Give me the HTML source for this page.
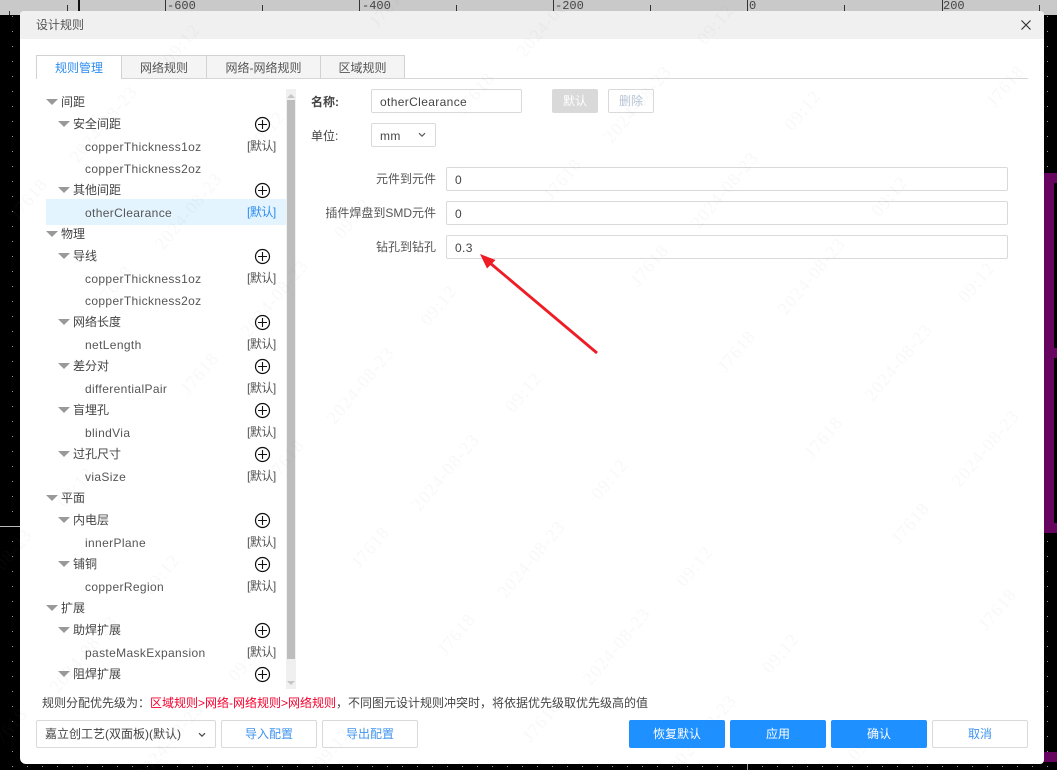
<!DOCTYPE html>
<html lang="zh"><head><meta charset="utf-8"><title>设计规则</title>
<style>
html,body{margin:0;padding:0;background:#000}
body{width:1057px;height:770px;position:relative;overflow:hidden;font-family:"Liberation Sans","Noto Sans CJK SC",sans-serif;font-size:12px;color:#444}
.a{position:absolute;white-space:nowrap}
.row{position:absolute;height:22px;line-height:23px;white-space:nowrap;font-size:12px}
.en{font-size:12px;letter-spacing:.36px;color:#555;line-height:24px}
.tri{position:absolute;width:0;height:0;border-left:6px solid transparent;border-right:6px solid transparent;border-top:6px solid #999}
.def{position:absolute;left:247px;height:22px;line-height:23px;font-size:12px;color:#555;letter-spacing:-.5px}
.box{position:absolute;box-sizing:border-box;border:1px solid #d9d9d9;border-radius:2px;background:transparent;line-height:24px;color:#444}
.tab{position:absolute;top:55px;height:23px;box-sizing:border-box;border:1px solid #d2d2d2;border-bottom:0;background:#f4f4f4;text-align:center;line-height:24px;font-size:12px;color:#555}
.btn{position:absolute;top:720px;height:28px;box-sizing:border-box;border-radius:2px;text-align:center;line-height:28px;font-size:12px}
.pri{background:#1e90ff;color:#fff}
.sec{border:1px solid #d9d9d9;color:#3f93ee;background:transparent}
.lbl{position:absolute;right:621px;height:24px;line-height:25px;font-size:12px;color:#555}
</style></head><body>

<svg class="a" style="left:0;top:0" width="1057" height="770">
<defs><pattern id="d" x="12" y="16" width="15" height="15" patternUnits="userSpaceOnUse"><rect width="1" height="1" fill="#999"/></pattern></defs>
<rect width="1057" height="770" fill="#000"/>
<rect width="1057" height="770" fill="url(#d)"/>
<rect x="0" y="526" width="20" height="1" fill="#bbb"/>
<rect x="747" y="764" width="1" height="6" fill="#999"/>
<path d="M1044 173H1057V183H1054V348H1057V358H1054V523H1057V533H1044Z" fill="#66045f"/>
<rect x="1044" y="752" width="13" height="10" fill="#66045f"/>
<rect x="0" y="0" width="1057" height="15" fill="#c9c9c9"/>
<rect x="78" y="0" width="2" height="15" fill="#111"/>
<g fill="#333"><rect x="9" y="11" width="1" height="4"/><rect x="67" y="5" width="1" height="10"/><rect x="165" y="0" width="1" height="15"/><rect x="262" y="5" width="1" height="10"/><rect x="359" y="0" width="1" height="15"/><rect x="456" y="5" width="1" height="10"/><rect x="553" y="0" width="1" height="15"/><rect x="650" y="5" width="1" height="10"/><rect x="747" y="0" width="1" height="15"/><rect x="844" y="5" width="1" height="10"/><rect x="942" y="0" width="1" height="15"/><rect x="1039" y="5" width="1" height="10"/></g>
<g font-family="Liberation Mono,monospace" font-size="12" fill="#444"><text x="167" y="9">-600</text><text x="362" y="9">-400</text><text x="555" y="9">-200</text><text x="749" y="9">0</text><text x="943" y="9">200</text></g>
</svg>

<div class="a" style="left:20px;top:11px;width:1024px;height:753px;background:#fff;border-radius:4px 4px 4px 6px;overflow:hidden">
<div class="a" style="left:0;top:0;width:1024px;height:28px;background:#f0f0f0"></div>
</div>

<div class="a" style="left:36px;top:16px;height:18px;line-height:18px;font-size:12px;color:#555">设计规则</div>
<svg class="a" style="left:1020px;top:19px" width="12" height="12"><path d="M1.5 1.5L10.5 10.5M10.5 1.5L1.5 10.5" stroke="#333" stroke-width="1.2" fill="none"/></svg>

<div class="a" style="left:36px;top:78px;width:992px;height:1px;background:#d6d6d6"></div>
<div class="tab" style="left:36px;width:86px;background:#fff;color:#2d8cf0;border-right:1px solid #d2d2d2;height:24px;z-index:2">规则管理</div>
<div class="tab" style="left:121px;width:86px">网络规则</div>
<div class="tab" style="left:206px;width:115px">网络-网络规则</div>
<div class="tab" style="left:320px;width:85px">区域规则</div>

<div class="a" style="left:46px;top:199px;width:240px;height:26px;background:#e3f4fe"></div>
<div class="a" style="left:286px;top:89px;width:10px;height:600px;background:#f0f0f0"></div>
<div class="a" style="left:287px;top:100px;width:8px;height:559px;background:#bdbdbd"></div>
<div class="tri" style="left:287px;top:94px;border-left-width:4px;border-right-width:4px;border-top:0;border-bottom:4px solid #c6c6c6"></div>
<div class="tri" style="left:287px;top:681px;border-left-width:4px;border-right-width:4px;border-top-width:4px;border-top-color:#c6c6c6"></div>

<div class="tri" style="left:46px;top:99px"></div><div class="row" style="left:61px;top:91px">间距</div>
<div class="tri" style="left:58px;top:121px"></div><div class="row" style="left:73px;top:113px">安全间距</div>
<div class="row en" style="left:85px;top:135px">copperThickness1oz</div><div class="def" style="top:135px">[默认]</div>
<div class="row en" style="left:85px;top:157px">copperThickness2oz</div>
<div class="tri" style="left:58px;top:187px"></div><div class="row" style="left:73px;top:179px">其他间距</div>
<div class="row en" style="left:85px;top:201px">otherClearance</div><div class="def" style="top:201px;color:#2d8cf0">[默认]</div>
<div class="tri" style="left:46px;top:231px"></div><div class="row" style="left:61px;top:223px">物理</div>
<div class="tri" style="left:58px;top:253px"></div><div class="row" style="left:73px;top:245px">导线</div>
<div class="row en" style="left:85px;top:267px">copperThickness1oz</div><div class="def" style="top:267px">[默认]</div>
<div class="row en" style="left:85px;top:289px">copperThickness2oz</div>
<div class="tri" style="left:58px;top:319px"></div><div class="row" style="left:73px;top:311px">网络长度</div>
<div class="row en" style="left:85px;top:333px">netLength</div><div class="def" style="top:333px">[默认]</div>
<div class="tri" style="left:58px;top:363px"></div><div class="row" style="left:73px;top:355px">差分对</div>
<div class="row en" style="left:85px;top:377px">differentialPair</div><div class="def" style="top:377px">[默认]</div>
<div class="tri" style="left:58px;top:407px"></div><div class="row" style="left:73px;top:399px">盲埋孔</div>
<div class="row en" style="left:85px;top:421px">blindVia</div><div class="def" style="top:421px">[默认]</div>
<div class="tri" style="left:58px;top:451px"></div><div class="row" style="left:73px;top:443px">过孔尺寸</div>
<div class="row en" style="left:85px;top:465px">viaSize</div><div class="def" style="top:465px">[默认]</div>
<div class="tri" style="left:46px;top:495px"></div><div class="row" style="left:61px;top:487px">平面</div>
<div class="tri" style="left:58px;top:517px"></div><div class="row" style="left:73px;top:509px">内电层</div>
<div class="row en" style="left:85px;top:531px">innerPlane</div><div class="def" style="top:531px">[默认]</div>
<div class="tri" style="left:58px;top:561px"></div><div class="row" style="left:73px;top:553px">铺铜</div>
<div class="row en" style="left:85px;top:575px">copperRegion</div><div class="def" style="top:575px">[默认]</div>
<div class="tri" style="left:46px;top:605px"></div><div class="row" style="left:61px;top:597px">扩展</div>
<div class="tri" style="left:58px;top:627px"></div><div class="row" style="left:73px;top:619px">助焊扩展</div>
<div class="row en" style="left:85px;top:641px">pasteMaskExpansion</div><div class="def" style="top:641px">[默认]</div>
<div class="tri" style="left:58px;top:671px"></div><div class="row" style="left:73px;top:663px">阻焊扩展</div>

<svg class="a" style="left:0;top:0" width="300" height="700">
<defs><g id="p"><circle r="7" fill="#fff" stroke="#111" stroke-width="1.2"/><path d="M-4.5 0H4.5M0 -4.5V4.5" stroke="#111" stroke-width="1.1"/></g></defs>
<use href="#p" x="262.5" y="124.5"/><use href="#p" x="262.5" y="190.5"/><use href="#p" x="262.5" y="256.5"/><use href="#p" x="262.5" y="322.5"/><use href="#p" x="262.5" y="366.5"/><use href="#p" x="262.5" y="410.5"/><use href="#p" x="262.5" y="454.5"/><use href="#p" x="262.5" y="520.5"/><use href="#p" x="262.5" y="564.5"/><use href="#p" x="262.5" y="630.5"/><use href="#p" x="262.5" y="674.5"/>
</svg>

<div class="a" style="left:311px;top:92px;line-height:20px;font-size:12px;font-weight:bold;color:#444">名称:</div>
<div class="box en" style="left:371px;top:89px;width:151px;height:24px;padding-left:8px;color:#444">otherClearance</div>
<div class="a" style="left:552px;top:89px;width:46px;height:24px;background:#d9d9d9;border-radius:2px;color:#fff;text-align:center;line-height:24px;font-size:12px">默认</div>
<div class="box" style="left:608px;top:89px;width:46px;height:24px;text-align:center;color:#b9c4d6;font-size:12px;line-height:23px">删除</div>
<div class="a" style="left:311px;top:126px;line-height:20px;font-size:12px;color:#444">单位:</div>
<div class="box en" style="left:371px;top:123px;width:65px;height:24px;padding-left:8px;color:#444">mm</div>
<svg class="a" style="left:418px;top:132px" width="8" height="6"><path d="M1 1.2L4 4.2L7 1.2" stroke="#555" stroke-width="1.1" fill="none"/></svg>

<div class="lbl" style="top:167px">元件到元件</div>
<div class="box en" style="left:446px;top:167px;width:562px;height:24px;padding-left:8px;color:#444">0</div>
<div class="lbl" style="top:201px">插件焊盘到SMD元件</div>
<div class="box en" style="left:446px;top:201px;width:562px;height:24px;padding-left:8px;color:#444">0</div>
<div class="lbl" style="top:235px">钻孔到钻孔</div>
<div class="box en" style="left:446px;top:235px;width:562px;height:24px;padding-left:8px;color:#444">0.3</div>

<svg class="a" style="left:470px;top:245px" width="140" height="120"><path d="M127 108L20 18" stroke="#ee1c25" stroke-width="2.8" fill="none"/><path d="M10 9L25.500 15L17 23.500Z" fill="#ee1c25"/></svg>

<div class="a" style="left:42px;top:694px;height:18px;line-height:18px;font-size:12px;color:#444">规则分配优先级为：<span style="color:#f5002d">区域规则&gt;网络-网络规则&gt;网络规则</span>，不同图元设计规则冲突时，将依据优先级取优先级高的值</div>

<div class="box" style="left:36px;top:720px;width:180px;height:28px;padding-left:8px;line-height:26px;font-size:12px;color:#444">嘉立创工艺(双面板)(默认)</div>
<svg class="a" style="left:198px;top:732px" width="8" height="6"><path d="M1 1.2L4 4.2L7 1.2" stroke="#444" stroke-width="1.2" fill="none"/></svg>
<div class="btn sec" style="left:221px;width:96px;line-height:26px">导入配置</div>
<div class="btn sec" style="left:322px;width:96px;line-height:26px">导出配置</div>
<div class="btn pri" style="left:629px;width:96px">恢复默认</div>
<div class="btn pri" style="left:730px;width:96px">应用</div>
<div class="btn pri" style="left:831px;width:96px">确认</div>
<div class="btn sec" style="left:932px;width:96px;line-height:26px">取消</div>

<svg class="a" style="left:0;top:0;pointer-events:none" width="1057" height="770" font-family="Liberation Serif,serif" font-size="18" fill="#888" fill-opacity=".055" text-anchor="middle" letter-spacing="1">
<text transform="translate(393 10) rotate(-50)">J7618</text>
<text transform="translate(480 97) rotate(-50)">J7618</text>
<text transform="translate(567 183) rotate(-50)">J7618</text>
<text transform="translate(654 269) rotate(-50)">J7618</text>
<text transform="translate(741 355) rotate(-50)">J7618</text>
<text transform="translate(828 441) rotate(-50)">J7618</text>
<text transform="translate(915 527) rotate(-50)">J7618</text>
<text transform="translate(1002 613) rotate(-50)">J7618</text>
<text transform="translate(33 203) rotate(-50)">J7618</text>
<text transform="translate(118 290) rotate(-50)">J7618</text>
<text transform="translate(204 377) rotate(-50)">J7618</text>
<text transform="translate(290 464) rotate(-50)">J7618</text>
<text transform="translate(375 551) rotate(-50)">J7618</text>
<text transform="translate(461 638) rotate(-50)">J7618</text>
<text transform="translate(546 725) rotate(-50)">J7618</text>
<text transform="translate(1010 90) rotate(-50)">J7618</text>
<text transform="translate(13 733) rotate(-50)">J7618</text>
<text transform="translate(555 22) rotate(-50)">2024-08-23</text>
<text transform="translate(642 108) rotate(-50)">2024-08-23</text>
<text transform="translate(729 194) rotate(-50)">2024-08-23</text>
<text transform="translate(816 280) rotate(-50)">2024-08-23</text>
<text transform="translate(903 366) rotate(-50)">2024-08-23</text>
<text transform="translate(990 452) rotate(-50)">2024-08-23</text>
<text transform="translate(108 128) rotate(-50)">2024-08-23</text>
<text transform="translate(193 215) rotate(-50)">2024-08-23</text>
<text transform="translate(279 302) rotate(-50)">2024-08-23</text>
<text transform="translate(365 389) rotate(-50)">2024-08-23</text>
<text transform="translate(450 476) rotate(-50)">2024-08-23</text>
<text transform="translate(536 563) rotate(-50)">2024-08-23</text>
<text transform="translate(621 650) rotate(-50)">2024-08-23</text>
<text transform="translate(707 737) rotate(-50)">2024-08-23</text>
<text transform="translate(3 571) rotate(-50)">2024-08-23</text>
<text transform="translate(88 658) rotate(-50)">2024-08-23</text>
<text transform="translate(174 745) rotate(-50)">2024-08-23</text>
<text transform="translate(720 28) rotate(-50)">09:12</text>
<text transform="translate(807 114) rotate(-50)">09:12</text>
<text transform="translate(894 200) rotate(-50)">09:12</text>
<text transform="translate(981 286) rotate(-50)">09:12</text>
<text transform="translate(186 48) rotate(-50)">09:12</text>
<text transform="translate(271 135) rotate(-50)">09:12</text>
<text transform="translate(357 222) rotate(-50)">09:12</text>
<text transform="translate(443 309) rotate(-50)">09:12</text>
<text transform="translate(528 396) rotate(-50)">09:12</text>
<text transform="translate(614 483) rotate(-50)">09:12</text>
<text transform="translate(699 570) rotate(-50)">09:12</text>
<text transform="translate(785 657) rotate(-50)">09:12</text>
<text transform="translate(871 744) rotate(-50)">09:12</text>
<text transform="translate(80 491) rotate(-50)">09:12</text>
<text transform="translate(166 578) rotate(-50)">09:12</text>
<text transform="translate(251 665) rotate(-50)">09:12</text>
<text transform="translate(337 752) rotate(-50)">09:12</text>
</svg>
</body></html>
